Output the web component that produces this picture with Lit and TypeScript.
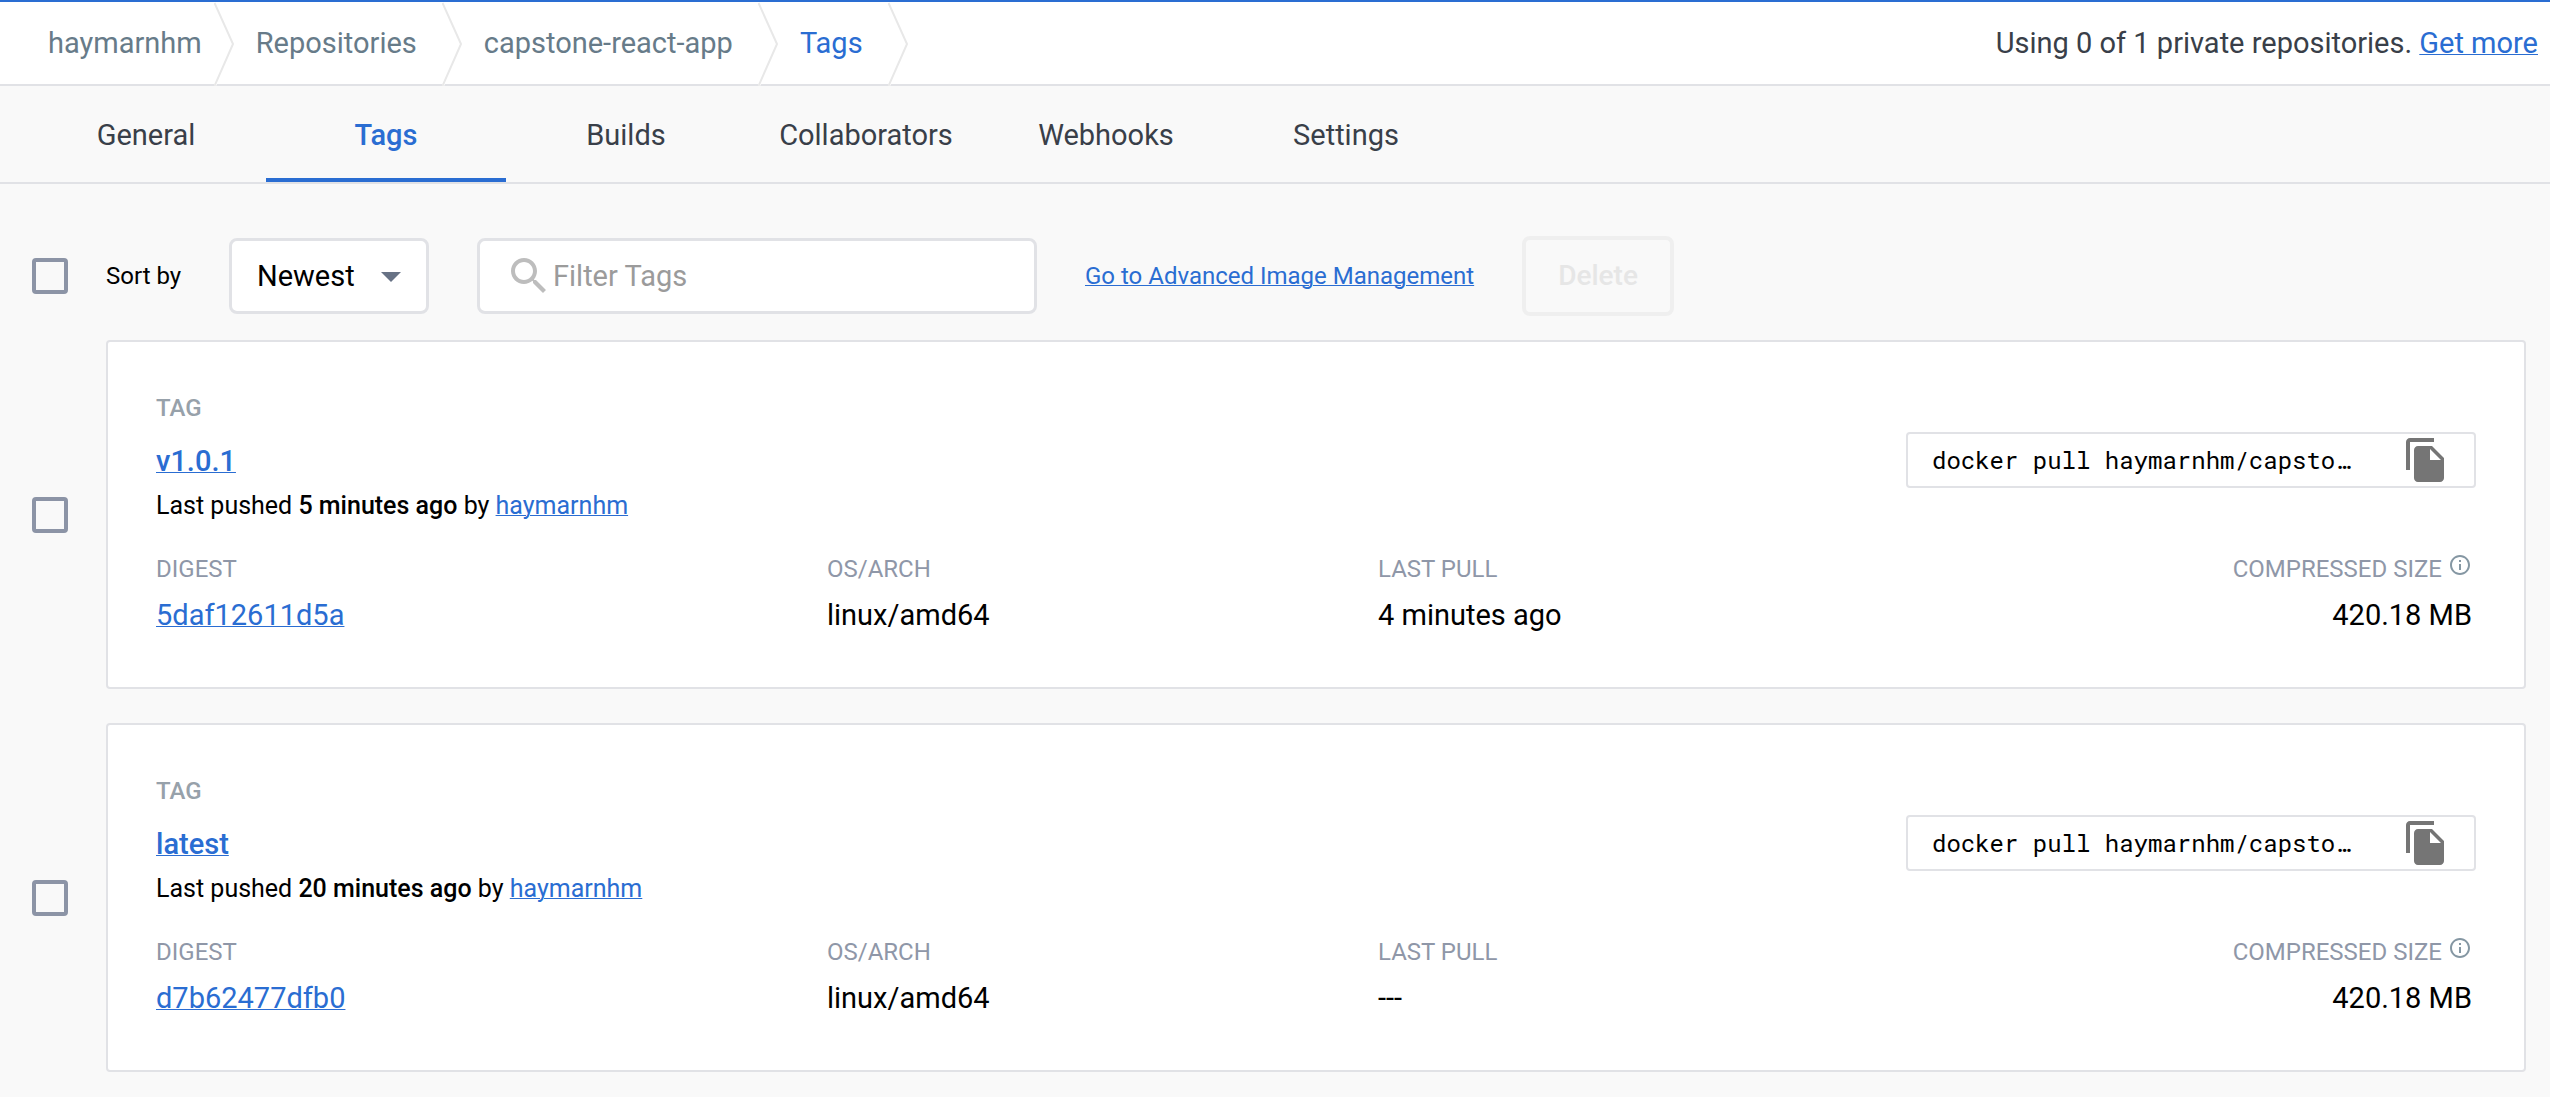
import { LitElement, html, css, nothing } from "lit";
import { customElement, property } from "lit/decorators.js";
import { classMap } from "lit/directives/class-map.js";

interface TagInfo {
  name: string;
  pushed: string;
  author: string;
  digest: string;
  arch: string;
  lastPull: string;
  size: string;
}

const REPOSITORY = "haymarnhm/capstone-react-app";

const TAGS: TagInfo[] = [
  {
    name: "v1.0.1",
    pushed: "5 minutes ago",
    author: "haymarnhm",
    digest: "5daf12611d5a",
    arch: "linux/amd64",
    lastPull: "4 minutes ago",
    size: "420.18 MB",
  },
  {
    name: "latest",
    pushed: "20 minutes ago",
    author: "haymarnhm",
    digest: "d7b62477dfb0",
    arch: "linux/amd64",
    lastPull: "---",
    size: "420.18 MB",
  },
];

const CRUMBS = ["haymarnhm", "Repositories", "capstone-react-app", "Tags"];
const TABS = ["General", "Tags", "Builds", "Collaborators", "Webhooks", "Settings"];

const shared = css`
  *,
  *::before,
  *::after {
    box-sizing: border-box;
  }
  a {
    color: #2a6dd2;
    text-decoration: underline;
    text-decoration-thickness: 1px;
  }
  input,
  select,
  button {
    font-family: inherit;
    margin: 0;
  }
  svg {
    display: block;
    flex: none;
  }
  .check {
    appearance: none;
    flex: none;
    width: 36px;
    height: 36px;
    border: 4px solid #8c94a6;
    border-radius: 4px;
    background: transparent;
  }
  .check:checked {
    background: #2a6dd2;
  }
`;

@customElement("hub-breadcrumb")
export class HubBreadcrumb extends LitElement {
  static styles = [
    shared,
    css`
      :host {
        display: block;
      }
      .bar {
        display: flex;
        justify-content: space-between;
        height: 86px;
        padding-right: 12px;
        border-top: 2px solid #2a6dd2;
        border-bottom: 2px solid #e1e2e6;
        background: #fff;
        font-size: 29px;
        line-height: 34px;
      }
      .crumbs {
        display: flex;
        margin: 0;
        padding: 0;
        list-style: none;
      }
      .crumb {
        display: flex;
        align-items: center;
        gap: 25px;
        padding-left: 22px;
      }
      .crumb:first-child {
        gap: 12px;
        padding-left: 48px;
      }
      .link {
        color: #677b89;
        text-decoration: none;
      }
      .link.current {
        color: #2a6dd2;
      }
      .chevron {
        align-self: flex-start;
        margin-bottom: -2px;
      }
      .usage {
        align-self: center;
        margin: 0;
        color: #393f49;
      }
    `,
  ];

  render() {
    return html`
      <div class="bar">
        <ol class="crumbs">
          ${CRUMBS.map(
            (crumb, i) => html`
              <li class="crumb">
                <a class=${classMap({ link: true, current: i === CRUMBS.length - 1 })} href="#">${crumb}</a>
                <svg class="chevron" width="20" height="84" viewBox="0 0 20 84" fill="none" aria-hidden="true">
                  <path d="M0.5 1L19 42L0.5 84" stroke="#fff" stroke-width="3" />
                  <path d="M0.5 1L19 42L0.5 84" stroke="#e8e8e8" stroke-width="2" />
                </svg>
              </li>
            `
          )}
        </ol>
        <p class="usage">Using 0 of 1 private repositories. <a href="#">Get more</a></p>
      </div>
    `;
  }
}

@customElement("hub-tabs")
export class HubTabs extends LitElement {
  static styles = [
    shared,
    css`
      :host {
        display: block;
      }
      .tabs {
        display: flex;
        height: 98px;
        padding-left: 26px;
        border-bottom: 2px solid #e1e2e6;
      }
      .tab {
        display: flex;
        align-items: center;
        justify-content: center;
        width: 240px;
        padding-top: 6px;
        border-bottom: 4px solid transparent;
        color: #393f49;
        font-size: 29px;
        line-height: 34px;
        text-decoration: none;
      }
      .tab.active {
        border-bottom-color: #2a6dd2;
        color: #2a6dd2;
        font-weight: 500;
      }
    `,
  ];

  render() {
    return html`
      <nav class="tabs">
        ${TABS.map(
          (tab) => html`<a class=${classMap({ tab: true, active: tab === "Tags" })} href="#">${tab}</a>`
        )}
      </nav>
    `;
  }
}

@customElement("hub-toolbar")
export class HubToolbar extends LitElement {
  static styles = [
    shared,
    css`
      :host {
        display: block;
      }
      .toolbar {
        display: flex;
        align-items: center;
        font-size: 24px;
        line-height: 28px;
      }
      .sort-label {
        width: 161px;
        padding-left: 38px;
        color: #000;
      }
      .sort,
      .filter {
        display: grid;
        align-items: center;
        height: 76px;
      }
      .sort {
        width: 200px;
        margin-right: 48px;
      }
      .filter {
        width: 560px;
        margin-right: 48px;
      }
      .sort > *,
      .filter > * {
        grid-area: 1 / 1;
      }
      .field {
        appearance: none;
        width: 100%;
        height: 100%;
        border: 3px solid #e1e2e6;
        border-radius: 8px;
        background: #fff;
        color: #000;
        font-size: 29px;
        line-height: 34px;
      }
      .select {
        padding: 0 48px 0 25px;
      }
      .text {
        padding: 0 24px 0 73px;
      }
      .text::placeholder {
        color: #9b9b9b;
        opacity: 1;
      }
      .caret {
        justify-self: end;
        margin-right: 14px;
        pointer-events: none;
      }
      .glass {
        margin-left: 28px;
        pointer-events: none;
      }
      .delete {
        height: 80px;
        margin-left: 48px;
        padding: 0 32px;
        border: 4px solid #efefef;
        border-radius: 8px;
        background: transparent;
        color: #e6e6e6;
        font-size: 28px;
        font-weight: 500;
        line-height: 34px;
      }
    `,
  ];

  render() {
    return html`
      <div class="toolbar">
        <input class="check" type="checkbox" aria-label="Select all tags" />
        <label class="sort-label" for="sort">Sort by</label>
        <div class="sort">
          <select class="field select" id="sort">
            <option>Newest</option>
          </select>
          <svg class="caret" width="48" height="48" viewBox="0 0 24 24" aria-hidden="true">
            <path d="M7 10l5 5 5-5z" fill="#677285" />
          </svg>
        </div>
        <div class="filter">
          <input class="field text" type="text" placeholder="Filter Tags" aria-label="Filter Tags" />
          <svg class="glass" width="48" height="48" viewBox="0 0 24 24" aria-hidden="true">
            <path
              fill="#bdbdbd"
              d="M15.5 14h-.79l-.28-.27C15.41 12.59 16 11.11 16 9.5 16 5.91 13.09 3 9.5 3S3 5.91 3 9.5 5.91 16 9.5 16c1.61 0 3.09-.59 4.23-1.57l.27.28v.79l5 4.99L20.49 19l-4.99-5zm-6 0C7.01 14 5 11.99 5 9.5S7.01 5 9.5 5 14 7.01 14 9.5 11.99 14 9.5 14z"
            />
          </svg>
        </div>
        <a href="#">Go to Advanced Image Management</a>
        <button class="delete" type="button" disabled>Delete</button>
      </div>
    `;
  }
}

@customElement("hub-tag-row")
export class HubTagRow extends LitElement {
  @property({ attribute: false }) tag!: TagInfo;

  static styles = [
    shared,
    css`
      :host {
        display: block;
      }
      .row {
        display: flex;
        align-items: center;
        gap: 38px;
      }
      .card {
        flex: 1;
        padding: 52px 48px 55px;
        border: 2px solid #e1e2e6;
        border-radius: 4px;
        background: #fff;
        color: #000;
        font-size: 24px;
        line-height: 28px;
      }
      .head {
        display: flex;
        justify-content: space-between;
        align-items: flex-start;
        margin-bottom: 35px;
      }
      .kind {
        color: #97a1aa;
        font-weight: 500;
      }
      .name {
        margin: 22px 0 14px;
        font-size: 29px;
        font-weight: 500;
        line-height: 34px;
      }
      .pushed {
        margin: 0;
        font-size: 25px;
      }
      .pushed strong {
        font-weight: 500;
      }
      .pull {
        display: flex;
        align-items: center;
        justify-content: space-between;
        width: 570px;
        height: 56px;
        margin-top: 38px;
        padding: 0 24px;
        border: 2px solid #e1e2e6;
        border-radius: 4px;
      }
      .command {
        width: 424px;
        padding: 0;
        border: 0;
        background: none;
        color: #000;
        font-family: "Roboto Mono", "DejaVu Sans Mono", "Liberation Mono", monospace;
        font-size: 24px;
        line-height: 28px;
        text-overflow: ellipsis;
      }
      .copy {
        padding: 0;
        border: 0;
        background: none;
      }
      .facts {
        display: grid;
        grid-template-columns: 671fr 551fr 549fr 549fr;
        margin: 0;
      }
      .term {
        color: #8f97a8;
      }
      .value {
        margin: 15px 0 0;
        font-size: 29px;
        line-height: 34px;
      }
      .size {
        padding-right: 4px;
        text-align: right;
      }
      .size .term {
        display: flex;
        justify-content: flex-end;
        gap: 6px;
      }
      .info {
        margin-top: -2px;
      }
    `,
  ];

  render() {
    const t = this.tag;
    if (!t) return nothing;
    return html`
      <div class="row">
        <input class="check" type="checkbox" aria-label=${`Select ${t.name}`} />
        <article class="card">
          <div class="head">
            <div>
              <div class="kind">TAG</div>
              <div class="name"><a href="#">${t.name}</a></div>
              <p class="pushed">Last pushed <strong>${t.pushed}</strong> by <a href="#">${t.author}</a></p>
            </div>
            <div class="pull">
              <input
                class="command"
                type="text"
                readonly
                aria-label="Pull command"
                .value=${`docker pull ${REPOSITORY}:${t.name}`}
              />
              <button class="copy" type="button" aria-label="Copy">
                <svg width="48" height="48" viewBox="0 0 24 24" aria-hidden="true">
                  <path
                    fill="#757575"
                    d="M16 1H4c-1.1 0-2 .9-2 2v14h2V3h12V1zm-1 4l6 6v10c0 1.1-.9 2-2 2H7.99C6.89 23 6 22.1 6 21l.01-14c0-1.1.89-2 1.99-2h7zm-1 7h5.5L14 6.5V12z"
                  />
                </svg>
              </button>
            </div>
          </div>
          <dl class="facts">
            <div>
              <dt class="term">DIGEST</dt>
              <dd class="value"><a href="#">${t.digest}</a></dd>
            </div>
            <div>
              <dt class="term">OS/ARCH</dt>
              <dd class="value">${t.arch}</dd>
            </div>
            <div>
              <dt class="term">LAST PULL</dt>
              <dd class="value">${t.lastPull}</dd>
            </div>
            <div class="size">
              <dt class="term">
                COMPRESSED SIZE
                <svg class="info" width="24" height="24" viewBox="0 0 24 24" aria-hidden="true">
                  <path
                    fill="#8597a3"
                    d="M11 7h2v2h-2zm0 4h2v6h-2zm1-9C6.48 2 2 6.48 2 12s4.48 10 10 10 10-4.48 10-10S17.52 2 12 2zm0 18c-4.41 0-8-3.59-8-8s3.59-8 8-8 8 3.59 8 8-3.59 8-8 8z"
                  />
                </svg>
              </dt>
              <dd class="value">${t.size}</dd>
            </div>
          </dl>
        </article>
      </div>
    `;
  }
}

@customElement("app-root")
export class AppRoot extends LitElement {
  static styles = css`
    :host {
      display: block;
      min-height: 100vh;
      background: #f9f9f9;
      font-family: Roboto, "Liberation Sans", sans-serif;
    }
    .content {
      display: flex;
      flex-direction: column;
      padding: 52px 24px 24px 32px;
    }
    .list {
      display: flex;
      flex-direction: column;
      gap: 34px;
      margin-top: 24px;
    }
  `;

  render() {
    return html`
      <hub-breadcrumb></hub-breadcrumb>
      <hub-tabs></hub-tabs>
      <main class="content">
        <hub-toolbar></hub-toolbar>
        <div class="list">${TAGS.map((tag) => html`<hub-tag-row .tag=${tag}></hub-tag-row>`)}</div>
      </main>
    `;
  }
}
